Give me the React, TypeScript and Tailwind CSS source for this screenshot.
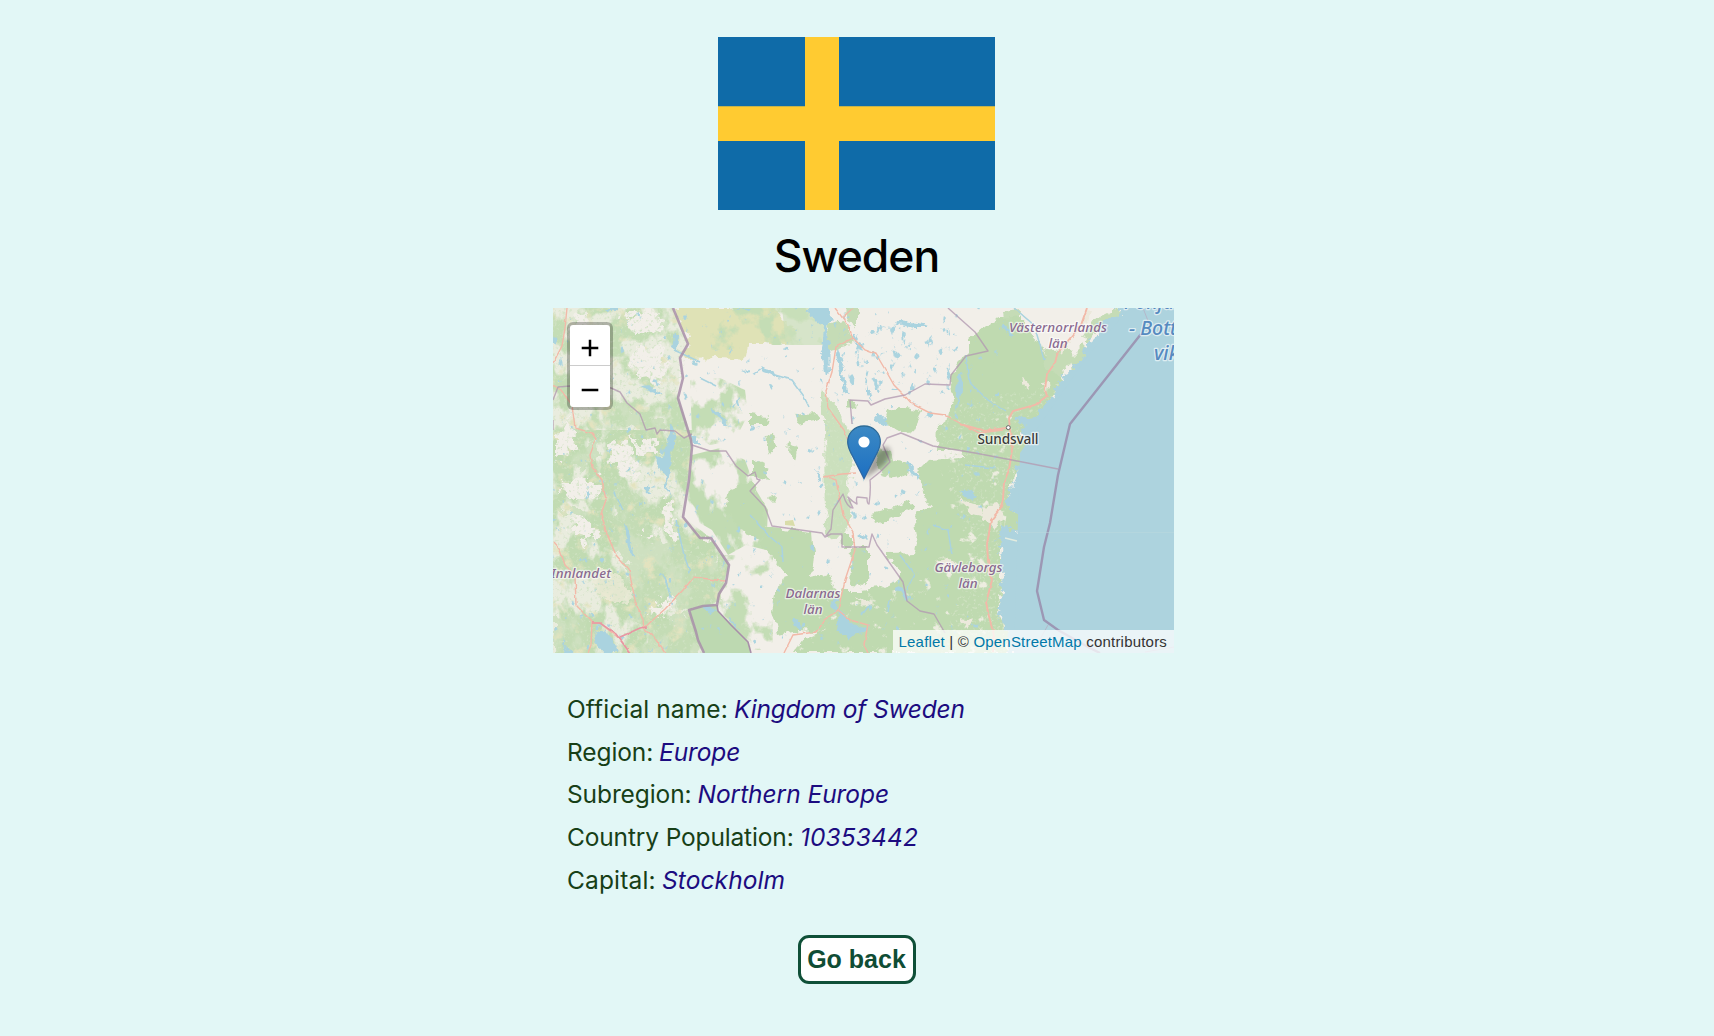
const facts = [
  { label: 'Official name:', value: 'Kingdom of Sweden', l: 'w-[160px] tracking-[0.1px]', v: 'tracking-[-0.2px]' },
  { label: 'Region:', value: 'Europe', l: 'w-[85px] tracking-[-0.1px]', v: 'tracking-[-0.1px]' },
  { label: 'Subregion:', value: 'Northern Europe', l: 'w-[123.5px] tracking-[-0.1px]', v: 'tracking-[-0.05px]' },
  { label: 'Country Population:', value: '10353442', l: 'w-[226px] tracking-[-0.15px]', v: 'tracking-[0.1px]' },
  { label: 'Capital:', value: 'Stockholm', l: 'w-[88px] tracking-[0.15px]', v: 'tracking-[0.1px]' },
];

function Flag() {
  return (
    <svg className="block h-[173px] w-[277px]" viewBox="0 0 277 173" role="img" aria-label="Flag of Sweden">
      <path fill="#0f6ba8" d="M0 0h277v173H0z" />
      <path fill="#ffcb31" d="M87 0h34v173H87zM0 69.3h277V104H0z" />
    </svg>
  );
}

function Noise({ id, freq, seed, color, alpha }: { id: string; freq: string; seed: number; color: string; alpha: string }) {
  return (
    <filter id={id} x="0" y="0" width="100%" height="100%" colorInterpolationFilters="sRGB">
      <feTurbulence type="fractalNoise" baseFrequency={freq} numOctaves={5} seed={seed} />
      <feColorMatrix values={`0 0 0 0 ${color.split(' ')[0]} 0 0 0 0 ${color.split(' ')[1]} 0 0 0 0 ${color.split(' ')[2]} ${alpha}`} />
      <feComposite in2="SourceGraphic" operator="in" />
    </filter>
  );
}

const coast =
  'M1119 308L1121 315 1112 314 1107 322 1098 322 1099 333 1092 340 1084 345 1085 357 1076 363 1073 371 1060 374 1063 381 1053 389 1055 396 1047 402 1043 409 1037 416 1030 419 1022 415 1015 414 1019 422 1024 426 1019 434 1023 440 1029 447 1022 453 1024 460 1016 468 1017 477 1012 482 1011 491 1006 500 1012 511 1020 517 1021 528 1016 531 1003 527 999 533 1002 545 1000 557 1003 567 1001 582 1003 597 997 610 1002 623 1009 635 1007 653 H1190 V300 H1119Z';

function MapTile() {
  return (
    <svg className="block h-[345px] w-[621px]" viewBox="553 308 621 345" aria-label="Map of central Sweden">
      <defs>
        <Noise id="dense" freq="0.042 0.026" seed={7} color="0.755 0.86 0.70" alpha="9 0 0 0 -3.6" />
        <Noise id="soft" freq="0.045 0.035" seed={12} color="0.77 0.865 0.71" alpha="8 0 0 0 -3.6" />
        <Noise id="sparse" freq="0.04" seed={3} color="0.77 0.865 0.71" alpha="8 0 0 0 -4" />
        <Noise id="sand" freq="0.07" seed={21} color="0.89 0.89 0.75" alpha="5 0 0 0 -2.9" />
        <Noise id="speck" freq="0.3" seed={5} color="0.82 0.89 0.77" alpha="4 0 0 0 -2.3" />
        <Noise id="gaps" freq="0.09" seed={31} color="0.93 0.93 0.88" alpha="8 0 0 0 -5.3" />
        <Noise id="ponds" freq="0.11 0.08" seed={16} color="0.67 0.83 0.875" alpha="12 0 0 0 -7.7" />
        <Noise id="fewPonds" freq="0.12 0.09" seed={26} color="0.67 0.83 0.875" alpha="12 0 0 0 -8.7" />
        <filter id="rough" x="-5%" y="-5%" width="110%" height="110%">
          <feTurbulence type="fractalNoise" baseFrequency="0.1" numOctaves={4} seed={4} />
          <feDisplacementMap in="SourceGraphic" scale="10" xChannelSelector="R" yChannelSelector="G" />
        </filter>
        <filter id="ragged" x="-5%" y="-5%" width="110%" height="110%">
          <feTurbulence type="fractalNoise" baseFrequency="0.09" numOctaves={4} seed={14} />
          <feDisplacementMap in="SourceGraphic" scale="26" xChannelSelector="R" yChannelSelector="G" />
        </filter>
        <filter id="wobble" x="-5%" y="-5%" width="110%" height="110%">
          <feTurbulence type="fractalNoise" baseFrequency="0.12" numOctaves={2} seed={9} />
          <feDisplacementMap in="SourceGraphic" scale="3" xChannelSelector="R" yChannelSelector="G" />
        </filter>
        <filter id="shore" x="-5%" y="-5%" width="110%" height="110%">
          <feTurbulence type="fractalNoise" baseFrequency="0.16" numOctaves={4} seed={19} />
          <feDisplacementMap in="SourceGraphic" scale="13" xChannelSelector="R" yChannelSelector="G" />
        </filter>
        <filter id="shade" x="-50%" y="-50%" width="200%" height="200%">
          <feGaussianBlur stdDeviation="2.6" />
        </filter>
        <linearGradient id="pin" x1="0" y1="0" x2="0" y2="1">
          <stop offset="0" stopColor="#3c89c4" />
          <stop offset="1" stopColor="#1d70c2" />
        </linearGradient>
        <linearGradient id="pinEdge" x1="0" y1="0" x2="0" y2="1">
          <stop offset="0" stopColor="#2e6c97" />
          <stop offset="1" stopColor="#2b66a8" />
        </linearGradient>
      </defs>
      <path fill="#f2efe9" d="M553 308h621v345H553z" />

      {/* western highlands */}
      <path fill="#dce8cc" opacity=".4" d="M553 308H673L688 344 680 358 678 398 692 445 683 517 711 538 729 565 717 605 689 610 704 653H553Z" />
      <path filter="url(#dense)" d="M553 430L692 430 692 445 683 517 711 538 729 565 717 605 689 610 704 653H553Z" />
      <path filter="url(#soft)" d="M553 308H673L688 344 680 358 678 398 690 432 553 432Z" />
      <path fill="#c5ddb6" opacity=".75" filter="url(#ragged)" d="M612 480L640 500 655 540 680 545 715 560 722 600 690 610 670 600 650 622 630 620 628 570 612 540zM650 625L690 612 698 660H640zM553 615L580 617 590 635 590 660H553zM566 450l30-8 6 14-20 14zM605 410l30-5 30 20-4 14-30-12zM560 505l30 6 14 20-20 0z" />
      <path filter="url(#sand)" d="M553 308H673L688 344 678 398 692 445 683 517 729 565 704 653H553Z" />
      <g fill="#f2efe9" filter="url(#ragged)">
        <path d="M574 318l8-6 6 8-4 10-8 4zM622 313l30-3 12 8-8 12-20 4zM640 345l20 4 10 20-14 12-24-10-2-16zM557 428l12-8 8 16-10 20-10 4zM608 440l8-4 18 22 4 16-12 6-12-12zM630 438l26 4 6 10-20 4zM565 482l26-4 16 6-6 14-22 2-18-8zM570 519l22 2 10 10-14 10-18-6zM660 500l10 0 8 36-5 6-12-20zM645 531l10 1-4 8-6-2zM655 602l18-2-4 12-22 6zM704 525l8-2 20 32-3 6-18-24z" />
      </g>
      <path fill="#edebd8" opacity=".8" filter="url(#ragged)" d="M594 568l24 6 14 14-10 20-20-10-10-14z" />

      {/* central woods */}
      <path fill="#f2efe9" d="M673 308H822V345L748 345 748 358 680 358 688 344Z" />
      <path fill="#dfe2b6" filter="url(#rough)" d="M674 308H772L796 330 788 345H748L745 360 720 358 686 359 682 350 690 343Z" />
      <path filter="url(#sparse)" d="M710 308H822V345H748V350H710Z" />
      <path fill="#cbdfba" opacity=".7" d="M782 308h32l13 18-2 19h-39z" />
      <path filter="url(#soft)" d="M690 380L720 378 745 390 748 415 735 440 710 445 692 435Z" />
      <path filter="url(#dense)" d="M692 455L720 448 745 460 756 490 768 510 766 550 746 545 728 555 712 530 686 515Z" />
      <path filter="url(#sparse)" d="M718 555h55v95h-30l-25-44z" />
      <g fill="#bfdab0" filter="url(#rough)">
        <path d="M730 490l20-8 14 24 4 20-8 14-16-6-18-24z" />
        <path d="M764 528L772 528 812 532 814 555 812 578 828 574 836 590 842 606 832 622 818 631 798 630 778 634 772 612 776 590 786 574 771 556 762 545Z" />
        <path d="M852 548H868V580L860 587 850 586Z" />
        <path d="M841 534h10v14h-9z" />
        <path d="M887 411l12-4 24 4-12 24-16-5-12-8z" />
        <path d="M848 399l9 2-1 10-8-3zM880 448l11 4 4 16-11 8-9-14zM884 458l26 6-2 10-18 4zM872 514l28-8 10-6 3 8-26 12-12 4zM765 436l10-1 4 12-11 6zM790 442l8 4-3 14-6-8zM750 415l20 2-6 8-14 0zM752 460l16 8 2 12-18-4zM795 415l20-2 5 6-22 4zM768 498l8-2-2 8z" />
        <path d="M968 340L985 325 1000 318 1024 318 1030 332 1040 343 1045 360 1058 370 1064 382 1044 409 1022 434 1028 450 1012 482 1006 500 1020 515 1018 530 1001 545 1001 590 998 612 1009 635 1007 653H795L806 637 824 628 832 606 842 590 860 590 880 588 896 580 902 574 888 557 888 554 913 553 917 535 914 514 932 506 922 492 918 470 928 460 964 458 960 450 936 450 937 425 950 415 953 400 950 385 952 372 958 362 968 352Z" />
      </g>
      <path fill="#cbe0bd" filter="url(#rough)" d="M823 387l6 12 16 22 12 25-10 36 4 34-8 20-17 2-1-118-4-14z" />
      <path fill="#c5dcb6" filter="url(#rough)" d="M826 325l18-4 10 20-8 6-18 4zM846 308h12l0 20-10-6zM1042 346l14 6 12-12 4 18-12 18-14-6zM1003 312l18-2-1 8-16 2zM1084 335l10-16 20-10 10 2-12 14-16 8-8 10zM1070 358l14-14 4 10-16 18z" />
      <path filter="url(#speck)" d="M553 308H673L688 344 678 398 692 445 683 517 729 565 704 653H553ZM823 387L857 446 850 530 825 535ZM938 430L965 400 1030 390 1064 382 1022 434 1001 545 1009 653H940L970 560Z" />
      <path filter="url(#gaps)" d="M825 590L900 590 960 540 935 450 950 440 1010 410 1022 434 1001 545 1009 653H795Z" />
      <path fill="#bdd9b1" d="M718 611L731 625 748 642 751 653H704L698 640 696 632 689 610 703 606 717 605Z" />
      <path fill="#d9dda9" d="M785 521l8-1 2 6-10-1z" />

      {/* clearings on the coast */}
      <g fill="#ece9dc" filter="url(#rough)">
        <path d="M1042 383l6-1 1 6-6 1zM1021 378l5 2 2 10-5-4zM982 506l14-2 8 10-8 14-12-8zM960 498l20 8 4 9-16-4zM935 562l14-3 14 8-12 5zM960 618l14 2-8 8zM855 596l20 8-8 5zM1085 310l6 1-4 10-5 6zM1060 344l10-4-8 14z" />
      </g>

      {/* sea and lakes */}
      <path fill="#add3de" filter="url(#shore)" d={coast} />
      <path fill="#add3de" d="M1130 308h44v345h-160l6-200 70-100z" />
      <g fill="#aad3df" filter="url(#rough)">
        <path d="M805 308h22l6 12-8 8 4 15 1 30-4 4-5-32 2-16-9-14zM838 348l4 12 2 20 4 12-5-4-5-24-3-12zM854 333l9 16-2 2-9-16zM868 385l4 16-4-6zM838 609l8 8 10 10 12-2-2 8-16 2-2 6-12-10zM796 617l8 12-5 1-6-10zM834 599l4 1-2 10-4-4zM596 630l16 6 6 17h-14l-10-12zM561 635l12 20h-5zM671 425l3 4-2 30-4 21-7-8-5-14 8-2zM625 522l3 8 6 26-4-2-6-22zM660 573l14 24-3-2-12-20zM706 606l8 2-6 8zM960 492l12-2 6 8-10 1zM900 585l10 14-5 2-9-14zM815 470l8 12-6-3zM878 414l10 12-7-1-6-7zM645 482l8 14-4 0-4-8zM666 475l4 20-5-8z" />
        <path d="M640 388l14-1 12 9-12-4zM674 331l4 6-1 14-6-4zM690 435l14 10-11-1zM738 397l4 12-5-5zM712 408l20 18-6-2-15-13zM740 371l10-1-2 4zM762 369l8 2 14 8-10-3-12-4zM722 570l2-12-3 6zM728 616l12 14-6-2zM898 320l24 4 7 3-14 0-18-4zM958 372l6-1-4 28-4 12 1-18zM1003 322l12 14-2 2-12-14zM908 462l12 16-3 1-10-13zM860 533l8 6-2 2-9-6zM600 308h18l-6 5zM736 308h16l-4 4z" />
      </g>
      <path filter="url(#ponds)" d="M835 325H950V390H870L845 400Z" />
      <path filter="url(#fewPonds)" d="M553 308H1000V653H553Z" />
      <g fill="none" stroke="#aad3df" strokeWidth="1.5" filter="url(#wobble)">
        <path d="M753 374L762 368 775 375 792 380 803 395 809 407M966 355L969 382 988 400 1006 412M1014 308L1034 325 1040 345 1044 360M676 520L684 555 690 572M613 490L623 510M750 515L768 535 782 547 783 562M890 600L888 612M870 604L862 615M700 378L716 386M900 555L914 574 907 590M933 525L948 530 952 555M965 465L994 468M674 350L700 362" />
      </g>
      <path fill="none" stroke="#e3ecdf" strokeWidth="1.6" d="M1005 538l12 3" />

      {/* roads */}
      <g fill="none" stroke="#f2b9a8" strokeWidth="1.4" filter="url(#wobble)">
        <path d="M567 308L565 328 562 346 553 363M553 385L561 390 572 405 575 428 592 433 596 439 590 455 592 467 602 480 606 500 601 514 607 534 616 555 629 570 635 600 643 620 644 628" />
        <path d="M553 542L560 550 565 565 575 575 576 605 592 622 591 645 588 653M592 623L600 623 621 640 630 653M644 628L665 609 683 590 694 577 716 580 725 581M644 628L654 637 665 653" />
        <path d="M835 308L848 325 853 338 865 350 876 354 886 371 894 385 903 394 912 404 930 413 945 415 965 426 979 433 1003 430M853 338L836 347 832 372 826 390 828 408 844 430 850 446M823 477L842 474 856 473M825 476L836 480 843 515 853 532 855 550 845 580 838 610 824 620 816 632 793 635 784 653M838 610L850 620 868 625 864 645 868 653" />
        <path strokeWidth="1.9" d="M1087 308L1081 325 1067 342 1057 355 1055 363 1047 374 1045 390 1047 396 1035 405 1013 411 1009 418 1010 430 1012 450 1009 470 1004 482 1003 500 1000 509 991 520 987 545 989 573 992 580 986 603 990 621 994 635 993 653M960 424L985 431 1006 428" />
        <path d="M853 308l-10 9" />
      </g>
      <path fill="none" stroke="#e896a2" strokeWidth="1.6" filter="url(#wobble)" d="M592 623L600 623 616 634 630 653M618 638L640 628 648 627" />

      {/* county and national borders */}
      <g fill="none" stroke="#b39bb1" strokeWidth="1.4" strokeLinejoin="round" opacity=".8">
        <path d="M553 400L558 387 570 386 611 388 620 392 627 403 640 414 646 430 655 428 657 434 660 430 675 431 684 438 692 434M692 445L710 451 726 451 736 466 748 476 755 472 757 479 760 480 750 491 765 507 772 526 822 533 825 537 831 534H842V547H869L872 534 877 545 903 582 907 601 920 611 934 614 945 633M825 537L831 529 833 510 843 494Q847 508 853 508Q849 500 848 497Q853 502 857 504Q856 499 857 497L867 498Q867 504 869 504Q871 490 870 480L880 472 890 462 883 445 887 438 901 433 933 446 975 453 1012 460 1058 469M852 424L850 400 868 401 871 405 885 399 905 395 925 384 950 385 951 375 966 356 988 351 975 332 948 308" />
        <path d="M553 420v10" />
      </g>
      <g fill="none" stroke="#a88fa9" strokeLinejoin="round">
        <path strokeWidth="2.6" opacity=".85" d="M673 308L688 344 680 358 683 378 678 398 691 440 692 447 689 480 683 517 700 538 711 538 729 565 726 583 719 594 717 605 703 606 689 610 696 632 698 640 704 653" />
        <path strokeWidth="1.6" d="M717 605L718 611 731 625 748 642 751 653" />
        <path stroke="#9c97b4" strokeWidth="2.4" d="M1141 334L1070 424 1058 475 1050 523 1044 547 1037 591 1044 620 1058 630 1088 647 1100 653" />
        <path stroke="#b4b8ca" strokeWidth="1" d="M1143 308L1150 326M1048 625L1034 650M1145 652L1174 647" />
      </g>
      <path stroke="#bbd8de" strokeWidth=".5" d="M1020 532.5H1174" />

      {/* place names */}
      <g fontFamily="'Noto Sans', sans-serif" textAnchor="middle" stroke="#fff" strokeOpacity=".6" strokeWidth="2.5" paintOrder="stroke" strokeLinejoin="round">
        <g fill="#8a6a90" fontStyle="italic" fontWeight="500" fontSize="13.4">
          <text x="1058" y="332" textLength="98">Västernorrlands</text>
          <text x="1058" y="348" textLength="19">län</text>
          <text x="581" y="578" textLength="60">Innlandet</text>
          <text x="813" y="598" textLength="55">Dalarnas</text>
          <text x="813" y="614" textLength="19">län</text>
          <text x="968.5" y="571.5" textLength="68">Gävleborgs</text>
          <text x="968" y="588" textLength="19">län</text>
        </g>
        <text x="1008" y="444" fontSize="13.7" fontWeight="500" fill="#3c3c3c" textLength="61">Sundsvall</text>
        <g fill="#568ac0" fontStyle="italic" fontWeight="500" fontSize="19.5" textAnchor="start">
          <text x="1124" y="309">Pohjan</text>
          <text x="1129" y="334.5">- Botten</text>
          <text x="1154" y="360">viken</text>
        </g>
      </g>
      <circle cx="1008.3" cy="427.6" r="2" fill="#fff" stroke="#666" strokeWidth="1" />

      {/* marker */}
      <path fill="#000" opacity=".34" filter="url(#shade)" d="M864 479L872 458Q880 446 888 447Q894 454 884 465Z" />
      <path
        fill="url(#pin)"
        stroke="url(#pinEdge)"
        strokeWidth="1.3"
        d="M864 426C854.5 426 847.7 433 847.7 442C847.7 447 849.5 450 851.5 454L864 478.5L876.5 454C878.5 450 880.3 447 880.3 442C880.3 433 873.5 426 864 426Z"
      />
      <circle cx="864" cy="442" r="5.6" fill="#fff" />
    </svg>
  );
}

function MapView() {
  return (
    <div className="relative ml-[13px] mt-[24px] h-[345px] w-[621px] overflow-hidden">
      <MapTile />
      <div className="absolute left-[14px] top-[14px] flex h-[88px] w-[46px] flex-col overflow-hidden rounded-[6px] border-[3px] border-black/25 bg-white bg-clip-padding">
        <button className="flex h-[41px] items-center justify-center border-b border-[#ccc]" aria-label="Zoom in">
          <svg className="mt-[5px] h-[18px] w-[18px]" viewBox="0 0 18 18"><path d="M.7 9h16.6M9 .7v16.6" stroke="#000" strokeWidth="2.5" /></svg>
        </button>
        <button className="flex flex-1 items-center justify-center" aria-label="Zoom out">
          <svg className="mt-[6px] h-[18px] w-[18px]" viewBox="0 0 18 18"><path d="M.7 9h16.6" stroke="#000" strokeWidth="2.5" /></svg>
        </button>
      </div>
      <div className="absolute bottom-0 right-0 h-[23px] w-[281px] whitespace-pre bg-white/75 pl-[6px] font-['Liberation_Sans',Arial,sans-serif] text-[15px] leading-[23px] tracking-[0.2px] text-[#333]">
        <a className="text-[#0078a8]">Leaflet</a> | © <a className="text-[#0078a8]">OpenStreetMap</a> contributors
      </div>
    </div>
  );
}

export default function App() {
  return (
    <main className="flex h-[1036px] w-full flex-col items-center overflow-hidden bg-[#e2f7f6] pr-px pt-[37px] font-['Inter',sans-serif]">
      <Flag />
      <h1 className="mt-[18px] flex h-[56px] items-center whitespace-nowrap text-[44.5px] font-medium leading-none tracking-[-1px] text-black">Sweden</h1>
      <MapView />
      <ul className="ml-[-19px] mt-[35px] w-[560px] text-[24.5px] leading-[42.7px]">
        {facts.map((f) => (
          <li key={f.label} className="flex h-[42.7px] gap-[7px] whitespace-nowrap">
            <span className={`text-[#174017] ${f.l}`}>{f.label}</span>
            <span className={`italic text-[#1c0c80] ${f.v}`}>{f.value}</span>
          </li>
        ))}
      </ul>
      <button className="mt-[34px] h-[49px] w-[118px] whitespace-nowrap rounded-[11px] border-[3px] border-[#0f5038] bg-white font-['Liberation_Sans',Arial,sans-serif] text-[25px] font-bold leading-none text-[#0f4d35]">
        Go back
      </button>
    </main>
  );
}
